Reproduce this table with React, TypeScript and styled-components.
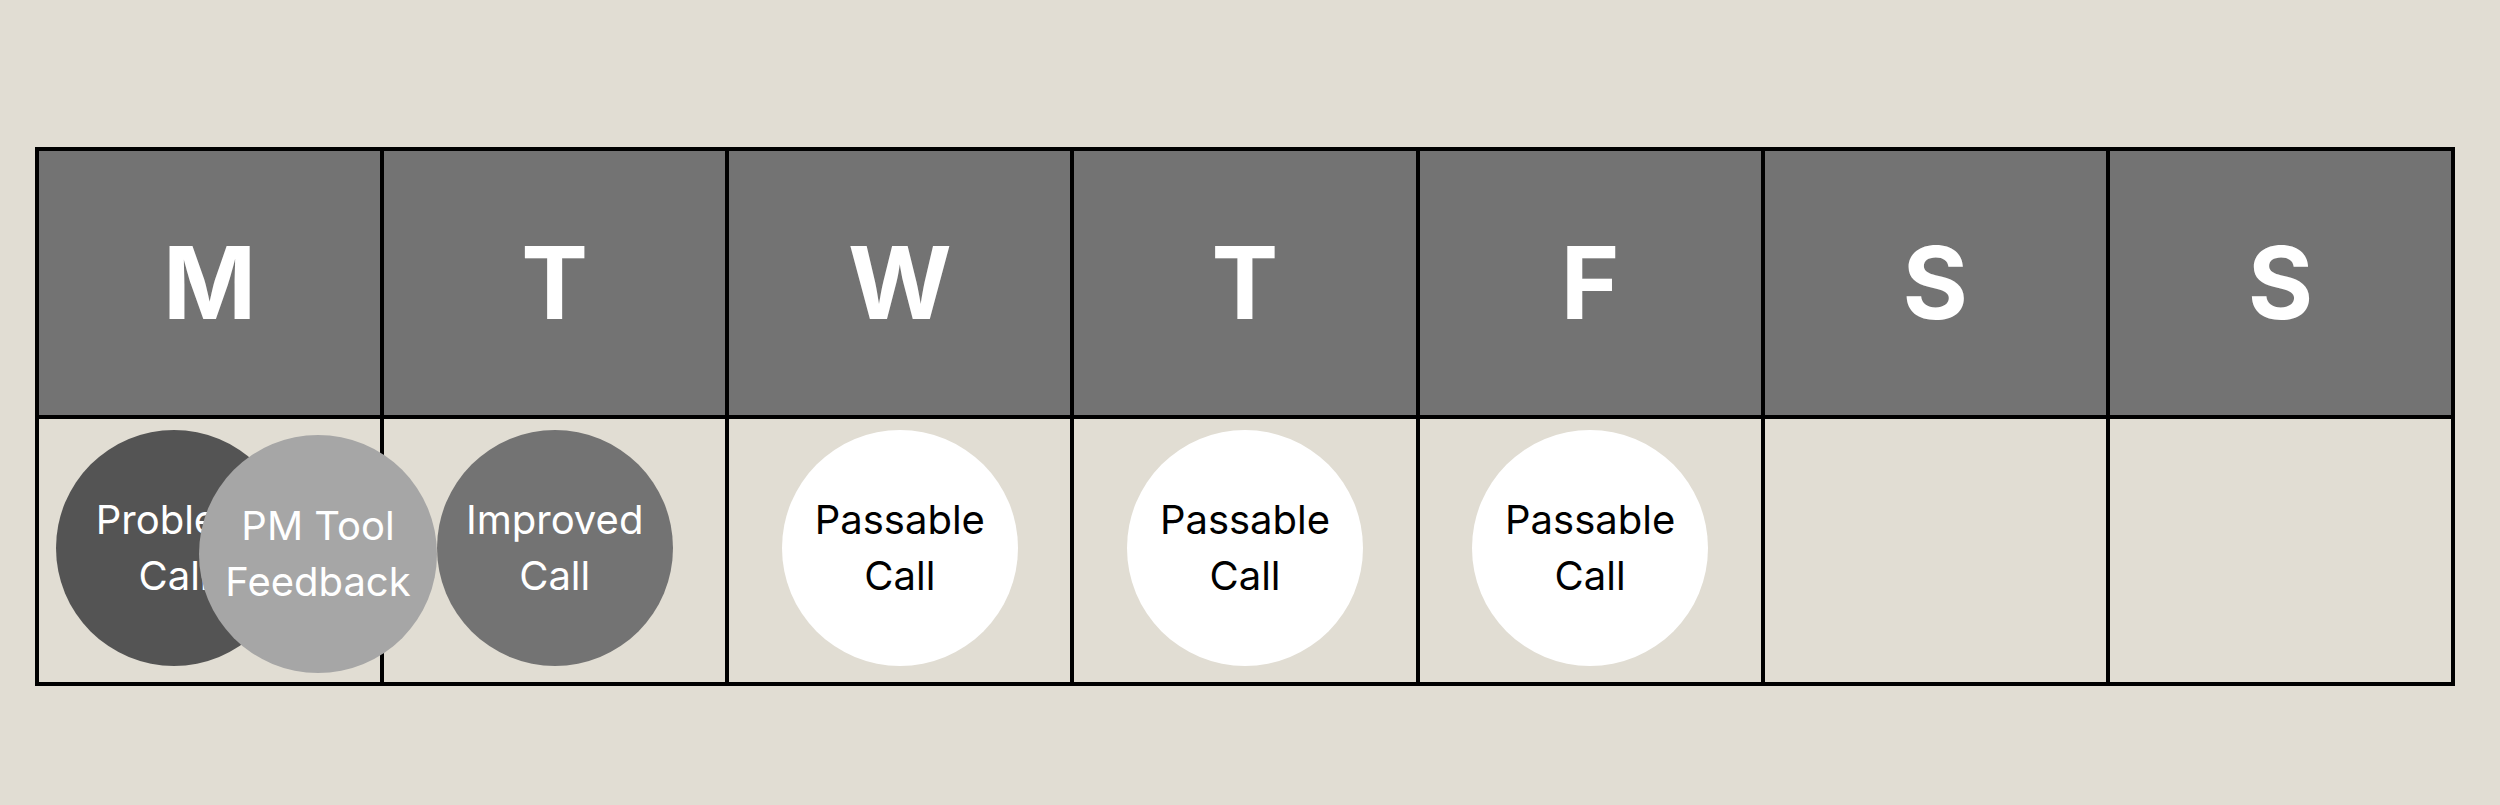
import styled, { createGlobalStyle } from "styled-components";

const GlobalStyle = createGlobalStyle`
  html, body {
    margin: 0;
    padding: 0;
    background: #e1ddd3;
  }
  body {
    font-family: Inter, "Noto Sans", "Liberation Sans", sans-serif;
  }
`;

type Tone = "dark" | "light" | "mid" | "white";

const toneColors: Record<Tone, { bg: string; fg: string }> = {
  dark: { bg: "#545454", fg: "#ffffff" },
  light: { bg: "#a6a6a6", fg: "#ffffff" },
  mid: { bg: "#737373", fg: "#ffffff" },
  white: { bg: "#ffffff", fg: "#000000" },
};

interface Call {
  label: string;
  tone: Tone;
}

const days: { letter: string; calls: Call[] }[] = [
  {
    letter: "M",
    calls: [
      { label: "Problem Call", tone: "dark" },
      { label: "PM Tool Feedback", tone: "light" },
    ],
  },
  { letter: "T", calls: [{ label: "Improved Call", tone: "mid" }] },
  { letter: "W", calls: [{ label: "Passable Call", tone: "white" }] },
  { letter: "T", calls: [{ label: "Passable Call", tone: "white" }] },
  { letter: "F", calls: [{ label: "Passable Call", tone: "white" }] },
  { letter: "S", calls: [] },
  { letter: "S", calls: [] },
];

export default function App() {
  return (
    <>
      <GlobalStyle />
      <Page>
        <Week>
          {days.map((d, i) => (
            <HeaderCell key={`h${i}`}>{d.letter}</HeaderCell>
          ))}
          {days.map((d, i) => (
            <DayCell key={`d${i}`} $stacked={d.calls.length > 1}>
              {d.calls.map((c, j) => (
                <Bubble key={j} $tone={c.tone} $overlap={j > 0}>
                  {c.label}
                </Bubble>
              ))}
            </DayCell>
          ))}
        </Week>
      </Page>
    </>
  );
}

const Page = styled.div`
  min-height: 805px;
  padding: 147px 0 0 35px;
  box-sizing: border-box;
`;

const Week = styled.div`
  display: grid;
  grid-template-columns: repeat(7, 1fr);
  grid-template-rows: 268px 267px;
  width: 2420px;
  box-sizing: border-box;
  border: 2px solid #000;
`;

const HeaderCell = styled.div`
  display: flex;
  align-items: center;
  justify-content: center;
  box-sizing: border-box;
  border: 2px solid #000;
  background: #737373;
  color: #fff;
  font-size: 100px;
  font-weight: 700;
  line-height: 1;
`;

const DayCell = styled.div<{ $stacked: boolean }>`
  display: flex;
  align-items: center;
  justify-content: ${({ $stacked }) => ($stacked ? "flex-start" : "center")};
  padding-left: ${({ $stacked }) => ($stacked ? "17px" : "0")};
  box-sizing: border-box;
  border: 2px solid #000;
  min-width: 0;
`;

const Bubble = styled.div<{ $tone: Tone; $overlap: boolean }>`
  position: relative;
  z-index: ${({ $overlap }) => ($overlap ? 2 : 1)};
  flex: 0 0 auto;
  display: flex;
  align-items: center;
  justify-content: center;
  width: ${({ $overlap }) => ($overlap ? "238px" : "236px")};
  height: ${({ $overlap }) => ($overlap ? "238px" : "236px")};
  margin: ${({ $overlap }) => ($overlap ? "6px 0 0 -93px" : "0 0 6px 0")};
  padding: 0 18px;
  box-sizing: border-box;
  border-radius: 50%;
  background: ${({ $tone }) => toneColors[$tone].bg};
  color: ${({ $tone }) => toneColors[$tone].fg};
  font-size: 40px;
  font-weight: 400;
  line-height: 56px;
  text-align: center;
`;
